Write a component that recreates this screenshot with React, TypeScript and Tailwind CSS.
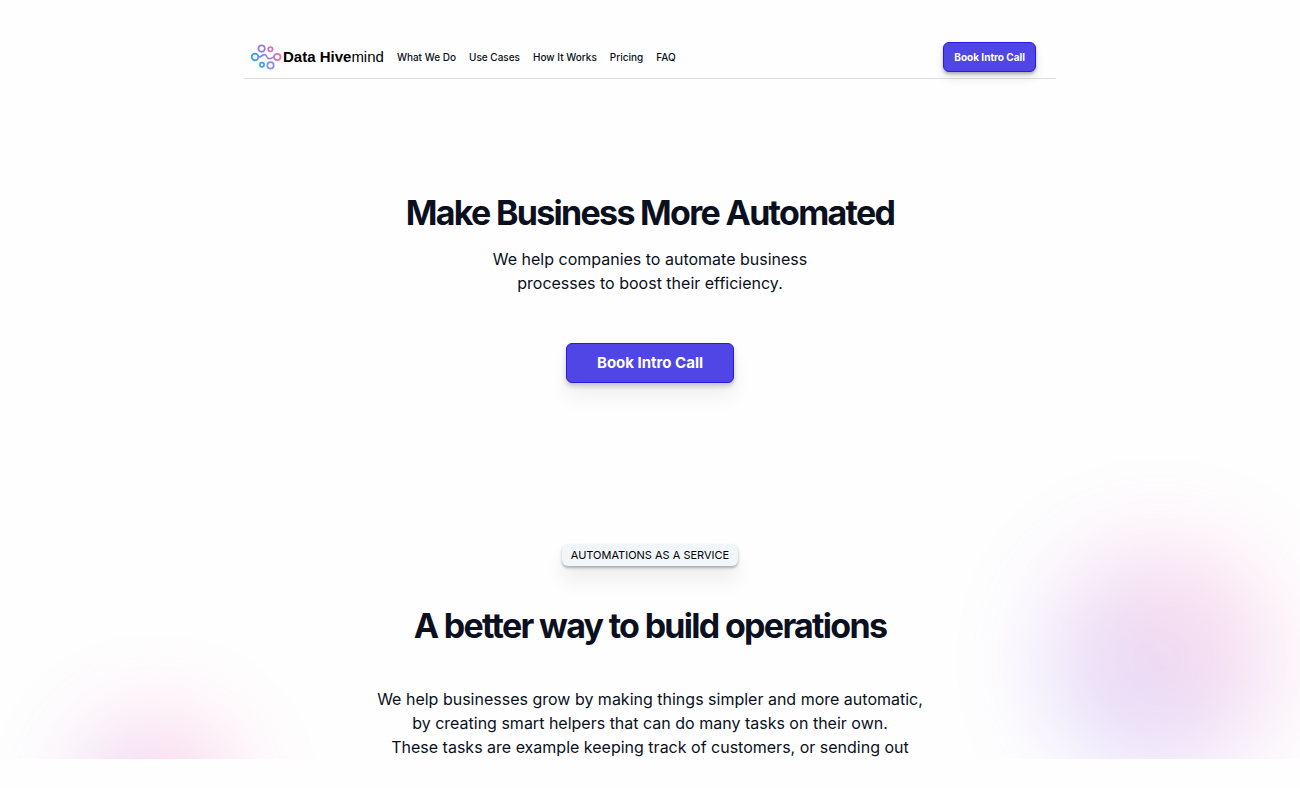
const links = ["What We Do", "Use Cases", "How It Works", "Pricing", "FAQ"];

function Logo() {
  return (
    <svg className="size-8 shrink-0" viewBox="0 0 32 32" fill="none" strokeWidth="1.7" aria-hidden="true">
      <defs>
        <linearGradient id="hive" x1="1" y1="0" x2="31" y2="0" gradientUnits="userSpaceOnUse">
          <stop offset="0" stopColor="#1fa5e6" />
          <stop offset="0.5" stopColor="#8f86de" />
          <stop offset="1" stopColor="#e86fae" />
        </linearGradient>
      </defs>
      <g stroke="url(#hive)">
        <circle cx="5" cy="16" r="3.3" />
        <circle cx="27.3" cy="16" r="3.2" />
        <circle cx="11.6" cy="7.6" r="3.2" stroke="#9180dc" />
        <circle cx="20.4" cy="8.3" r="2.2" stroke="#d274bd" />
        <circle cx="12" cy="23.7" r="2.1" stroke="#2fa6e4" />
        <circle cx="20.5" cy="24.4" r="3.2" stroke="#8590e2" />
        <path d="M8.3 16C10.500 15.900 11.300 15.400 12.300 14.500C13.600 13.300 15.500 13.200 16.400 15C17.300 17 18.600 18 20.400 17.600C21.800 17.200 22.500 16.200 24.100 16" />
      </g>
    </svg>
  );
}

export default function App() {
  return (
    <div className="min-h-screen bg-[#fefefe] font-[Inter,sans-serif] text-[#0b1020]">
      <div className="relative overflow-hidden pt-[41px]">
        <div className="pointer-events-none absolute inset-0" aria-hidden="true">
          <div className="absolute right-[28px] top-[548px] size-[226px] rounded-full bg-linear-to-tr from-[#9089fc] from-10% to-[#ff80b5] to-90% opacity-30 blur-[48px]" />
          <div className="absolute left-[72px] top-[716px] size-[166px] rounded-full bg-linear-to-tr from-[#9089fc] to-[#ff80b5] to-80% opacity-30 blur-[44px]" />
        </div>

        <div className="relative">
          <header className="mx-auto flex max-w-[812px] items-center justify-between border-b border-neutral-300/80 pr-5 pl-1.5 pb-[5px]">
            <div className="flex items-center gap-[13px]">
              <a href="#" className="flex items-center gap-px font-['Liberation_Sans',sans-serif] text-[15px] text-black">
                <Logo />
                <span><b>Data Hive</b>mind</span>
              </a>
              <nav className="flex gap-[13px] text-[10px] font-medium">
                {links.map((label) => (
                  <a key={label} href="#">{label}</a>
                ))}
              </nav>
            </div>
            <button className="rounded-md border border-[#2a1be0] bg-[#4f46e5] px-2.5 py-1.5 text-[10px] leading-4 font-bold text-white shadow-[0_2px_3px_rgb(0_0_0/0.25),0_6px_10px_rgb(0_0_0/0.1)]">
              Book Intro Call
            </button>
          </header>

          <main className="flex flex-col items-center text-center">
            <h1 className="mt-28 text-[34px] leading-[44px] font-bold tracking-tighter">Make Business More Automated</h1>
            <p className="mt-3 max-w-80 text-base leading-6">
              We help companies to automate business processes to boost their efficiency.
            </p>
            <button className="mt-12 rounded-md border border-[#2a1be0] bg-[#4f46e5] px-[30px] py-[7px] text-[15px] leading-6 font-bold text-white shadow-[0_3px_5px_rgb(0_0_0/0.2),0_14px_20px_rgb(0_0_0/0.06)]">
              Book Intro Call
            </button>

            <span className="mt-[161px] rounded-md bg-[#f0f6f9] px-[9px] py-0.5 text-[11px] leading-[18px] text-black shadow-[0_2px_3px_rgb(0_0_0/0.3),0_14px_20px_rgb(0_0_0/0.07)]">
              AUTOMATIONS AS A SERVICE
            </span>
            <h2 className="mt-[38px] text-[34px] leading-[44px] font-bold tracking-tighter">A better way to build operations</h2>
            <p className="mt-[39px] max-w-[560px] text-base leading-6">
              We help businesses grow by making things simpler and more automatic,
              <br />
              by creating smart helpers that can do many tasks on their own.
              <br />
              These tasks are example keeping track of customers, or sending out
            </p>
          </main>
        </div>
      </div>
    </div>
  );
}
